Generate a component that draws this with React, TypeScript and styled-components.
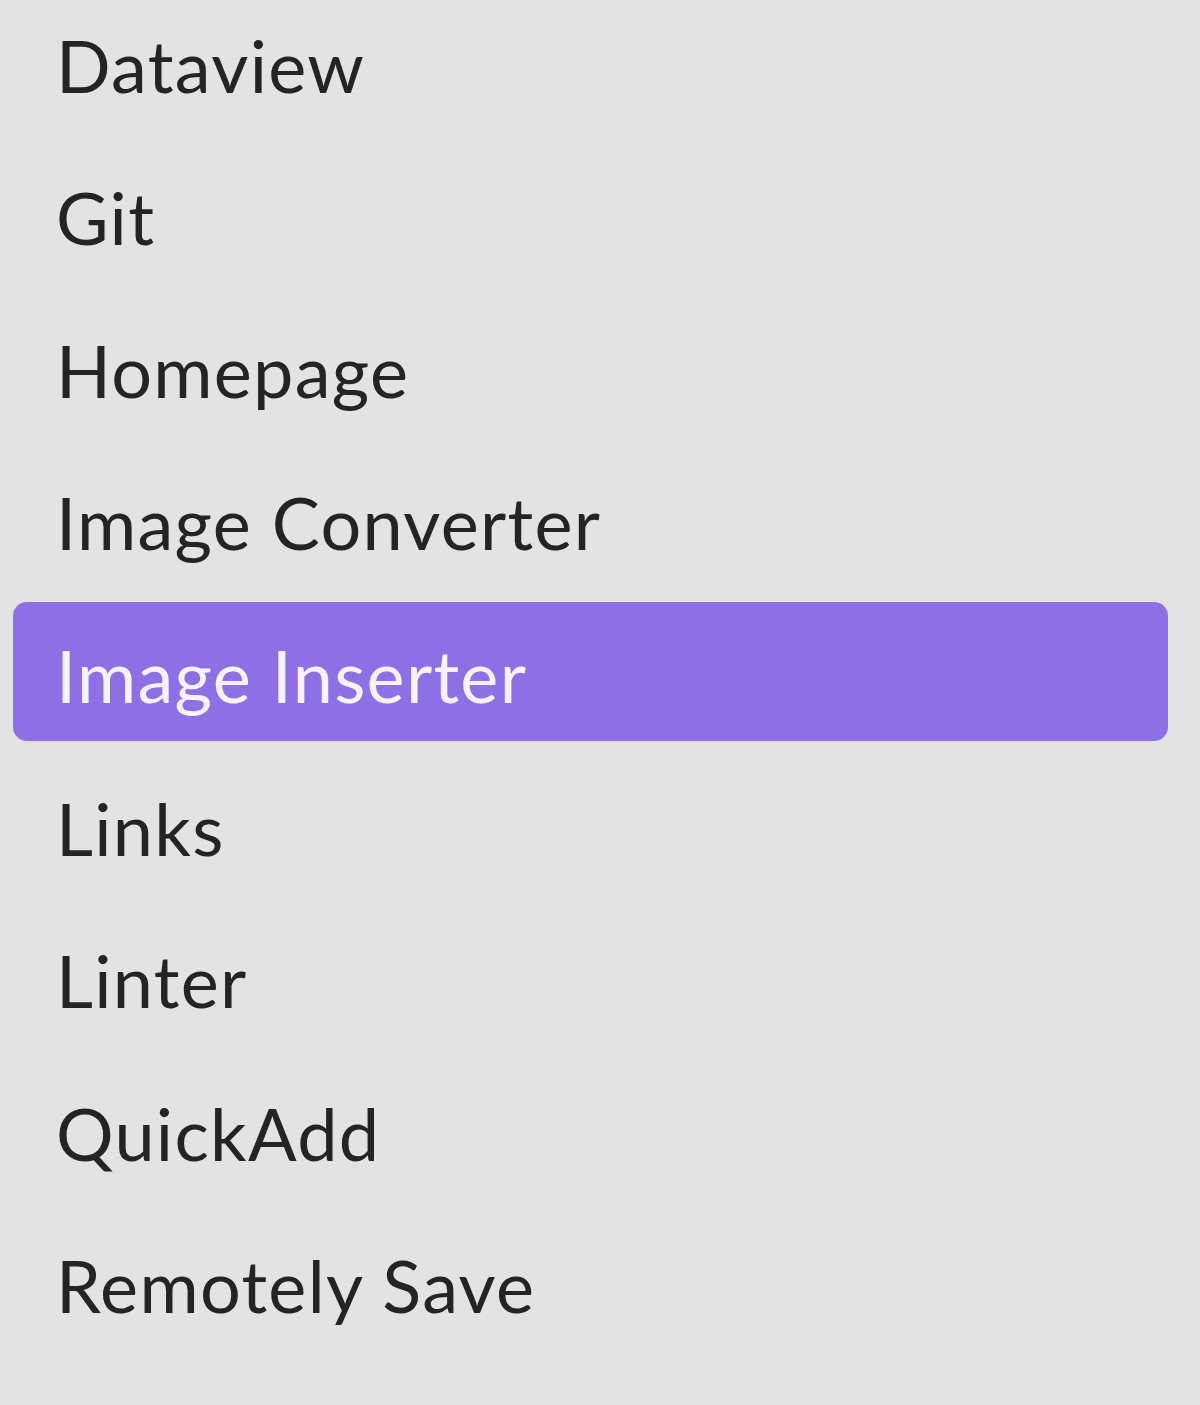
import React from "react";
import styled, { createGlobalStyle } from "styled-components";

const Global = createGlobalStyle`
  html, body { margin: 0; padding: 0; background: #e3e3e3; }
  body { overflow: hidden; }
`;

const Page = styled.div`
  width: 1200px;
  height: 1405px;
  background: #e3e3e3;
  overflow: hidden;
`;

const List = styled.nav`
  display: flex;
  flex-direction: column;
  gap: 13.6px;
  margin-top: -8.4px;
  padding-left: 13px;
  width: 1155px;
`;

const Item = styled.div<{ $active?: boolean }>`
  height: 139px;
  line-height: 147px;
  padding-left: 43px;
  border-radius: 14px;
  font-family: Lato, "Open Sans", sans-serif;
  font-size: 72px;
  letter-spacing: 1.3px;
  white-space: nowrap;
  color: ${(p) => (p.$active ? "#f6f2ff" : "#242424")};
  background: ${(p) => (p.$active ? "#8e70e5" : "transparent")};
`;

const items = [
  "Dataview",
  "Git",
  "Homepage",
  "Image Converter",
  "Image Inserter",
  "Links",
  "Linter",
  "QuickAdd",
  "Remotely Save",
];

export default function App() {
  return (
    <Page>
      <Global />
      <List>
        {items.map((t) => (
          <Item key={t} $active={t === "Image Inserter"}>
            {t}
          </Item>
        ))}
      </List>
    </Page>
  );
}
